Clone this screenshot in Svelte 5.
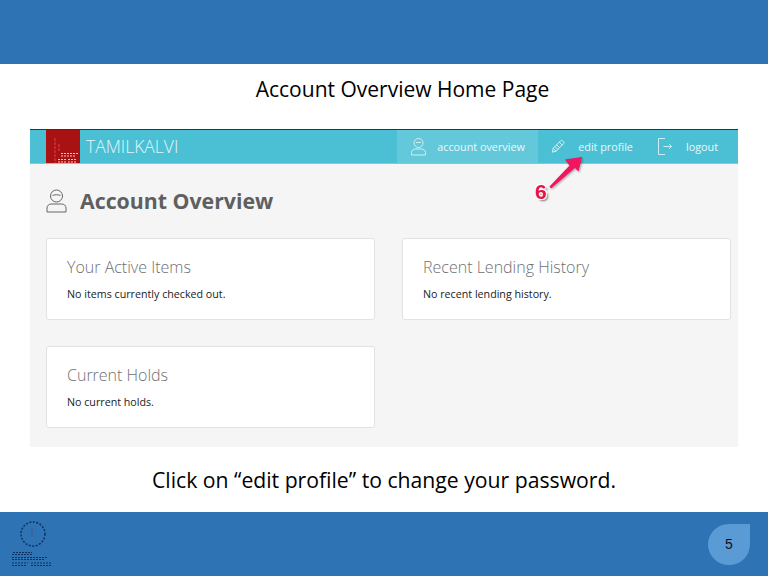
<script>
	const cards = [
		{ title: 'Your Active Items', text: 'No items currently checked out.' },
		{ title: 'Recent Lending History', text: 'No recent lending history.' },
		{ title: 'Current Holds', text: 'No current holds.' }
	];
</script>

<div class="slide">
	<div class="band top"></div>

	<main>
		<h1>Account Overview Home Page</h1>

		<div class="shot">
			<nav>
				<div class="logo">
					<svg width="34" height="33" viewBox="0 0 34 33">
						<g stroke="#e8c9c9" stroke-width="1.200" stroke-dasharray="2 1" fill="none">
							<path d="M15 23.500h17M15 26h15M12 29.500h8M22 29.500h9M12 32h8M22 32h8" />
						</g>
						<path d="M9 8v25M13 14v8" stroke="#c9262c" stroke-width="2" stroke-dasharray="3 1" />
					</svg>
				</div>
				<span class="brand">TAMILKALVI</span>
				<div class="links">
					<div class="link active">
						<svg width="17" height="19" viewBox="0 0 17 19" fill="none" stroke="#cfeef3" stroke-width="1">
							<circle cx="8.500" cy="6" r="4.500" />
							<path d="M6 5.500h5M1.500 18v-2.500c0-2 2-3.500 4-3.500h6c2 0 4 1.500 4 3.500v2.500z" />
						</svg>
						<span>account overview</span>
					</div>
					<div class="link pencil">
						<svg width="14" height="15" viewBox="0 0 16 16" fill="none" stroke="#d8f2f6" stroke-width="1.100">
							<path d="M1.500 14.500l1-4.500 8.500-8.500c1-.8 2-.5 2.500.2l.8.8c.6.7.7 1.500 0 2.300l-8.500 8.500zM2.500 10l3.500 3.500M4.500 8l3.500 3.500M6.500 6l3.500 3.500M9.500 3l3.500 3.500" />
						</svg>
						<span>edit profile</span>
					</div>
					<div class="link logout">
						<svg width="14" height="17" viewBox="0 0 14 17" fill="none" stroke="#cfeef3" stroke-width="1">
							<path d="M7 .5H.5v16H7M5.500 8.500h8M11 6l2.500 2.500L11 11" />
						</svg>
						<span>logout</span>
					</div>
				</div>
			</nav>

			<div class="content">
				<div class="heading">
					<svg width="21" height="24" viewBox="0 0 21 24" fill="none" stroke="#666" stroke-width="1">
						<circle cx="10.500" cy="7" r="6" />
						<path d="M6.500 6.500c2-1 6-1 8 0M1 23v-4c0-2.500 2-4 4.500-4h10c2.500 0 4.500 1.500 4.500 4v4z" />
					</svg>
					<h2>Account Overview</h2>
				</div>
				<div class="cards">
					{#each cards as card}
						<section class="card">
							<h3>{card.title}</h3>
							<p>{card.text}</p>
						</section>
					{/each}
				</div>
			</div>

			<svg class="arrow" width="60" height="50" viewBox="0 0 60 50">
				<defs>
					<filter id="sh" x="-30%" y="-30%" width="160%" height="160%">
						<feDropShadow dx="1" dy="1" stdDeviation="0.800" flood-color="#000" flood-opacity="0.35" />
					</filter>
				</defs>
				<path d="M9.500 36.500L29.500 15.500 25 9.500 42 7 38.500 21.500 35 18 11 38.500z" fill="#f0135f" filter="url(#sh)" />
			</svg>
			<span class="step">6</span>
		</div>

		<p class="note">Click on “edit profile” to change your password.</p>
	</main>

	<footer class="band bottom">
		<svg class="seal" width="44" height="56" viewBox="0 0 44 56" fill="none" stroke="#10305c">
			<circle cx="22" cy="15" r="12" stroke-width="1.500" stroke-dasharray="2 1.500" />
			<path d="M21 9v9" stroke="#3a5f93" stroke-width="1" />
			<path d="M2 33.500h19M1 35.500h20M1 38.500h35M1 40.500h33M1 44h16M20 44h20M1 46.500h14M20 46.500h21" stroke-width="1.200" stroke-dasharray="2 1" />
		</svg>
		<div class="page">5</div>
	</footer>
</div>

<style>
	:global(body) {
		margin: 0;
		background: #fff;
	}

	.slide {
		width: 768px;
		height: 576px;
		display: flex;
		flex-direction: column;
		overflow: hidden;
		font-family: 'Open Sans', sans-serif;
	}

	.band {
		background: #2e74b5;
	}

	.top {
		height: 64px;
	}

	main {
		height: 448px;
		display: flex;
		flex-direction: column;
		padding: 0 30px;
	}

	h1 {
		margin: 12px 0 0;
		height: 53px;
		font-size: 21px;
		line-height: 27px;
		font-weight: 400;
		color: #000;
		text-align: center;
		padding-left: 37px;
	}

	.shot {
		position: relative;
		width: 708px;
		height: 318px;
		background: #f5f5f5;
		border-top: 1px solid #333;
		box-sizing: border-box;
	}

	nav {
		height: 34px;
		background: #4bc0d4;
		border-bottom: 1px solid #6fcfdf;
		box-sizing: border-box;
		display: flex;
		align-items: stretch;
		padding-left: 16px;
	}

	.logo {
		width: 34px;
		height: 33px;
		background: #a91212;
	}

	.logo svg {
		display: block;
	}

	.brand {
		margin-left: 6px;
		font-size: 17.5px;
		line-height: 33px;
		color: #e2f6f9;
		font-weight: 300;
	}

	.links {
		margin-left: auto;
		display: flex;
		padding-right: 20px;
	}

	.link {
		display: flex;
		align-items: center;
		font-size: 10.8px;
		color: #eaf8fa;
	}

	.active {
		background: #63c9da;
		width: 141px;
		padding-left: 13px;
		box-sizing: border-box;
	}

	.active span {
		margin-left: 10px;
	}

	.pencil {
		padding-left: 13px;
	}

	.pencil span {
		margin-left: 13px;
	}

	.logout {
		padding-left: 25px;
	}

	.logout span {
		margin-left: 14px;
	}

	.content {
		padding: 24px 7px 0 16px;
	}

	.heading {
		display: flex;
		align-items: center;
		gap: 13px;
		height: 26px;
	}

	h2 {
		margin: 0;
		font-size: 21.3px;
		font-weight: 700;
		color: #5f5f5f;
		line-height: 26px;
	}

	.cards {
		margin-top: 24px;
		display: grid;
		grid-template-columns: 329px 329px;
		column-gap: 27px;
		row-gap: 26px;
	}

	.card {
		height: 82px;
		box-sizing: border-box;
		background: #fff;
		border: 1px solid #e2e2e2;
		border-radius: 3px;
		padding: 18px 20px 0;
	}

	h3 {
		margin: 0;
		font-size: 16px;
		line-height: 21px;
		font-weight: 300;
		color: #707070;
	}

	.card p {
		margin: 9px 0 0;
		font-size: 10.7px;
		line-height: 14px;
		color: #222;
	}

	.arrow {
		position: absolute;
		left: 510px;
		top: 20px;
	}

	.step {
		position: absolute;
		left: 505px;
		top: 50px;
		font-family: 'Liberation Sans', sans-serif;
		font-size: 21px;
		line-height: 23px;
		font-weight: 700;
		color: #e8114f;
		text-shadow: -1px -1px 0 #fff, 1px -1px 0 #fff, -1px 1px 0 #fff, 1px 1px 0 #fff, 2px 2px 2px #777;
	}

	.note {
		margin: 20px 0 0;
		font-size: 21.2px;
		line-height: 26px;
		font-weight: 500;
		color: #000;
		text-align: center;
	}

	.bottom {
		height: 64px;
		position: relative;
		display: flex;
		justify-content: space-between;
		align-items: flex-start;
		padding: 7px 18px 0 11px;
		box-sizing: border-box;
	}

	.page {
		width: 42px;
		height: 41px;
		background: #5b9bd5;
		border-radius: 50% 0 50% 50%;
		font-family: 'Liberation Sans', sans-serif;
		font-size: 14px;
		line-height: 41px;
		text-align: center;
		color: #111;
		margin-top: 5px;
	}
</style>
